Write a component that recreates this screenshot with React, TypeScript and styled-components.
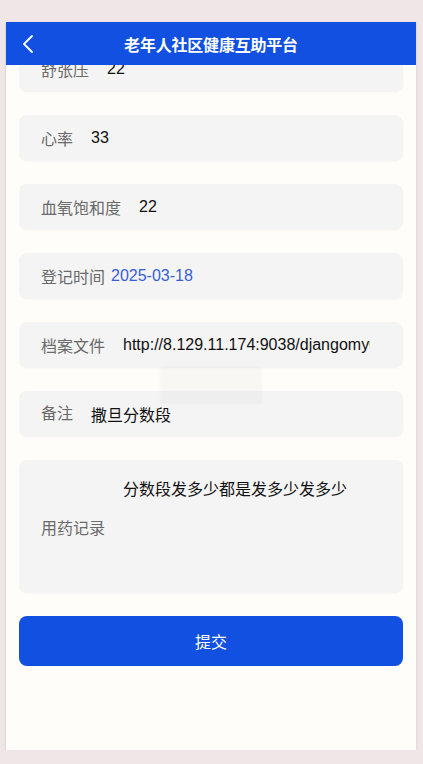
import React from 'react';
import styled, { createGlobalStyle } from 'styled-components';

const GlobalStyle = createGlobalStyle`
  html, body {
    margin: 0;
    padding: 0;
    background: #f0e5e7;
    font-family: "Liberation Sans", "Noto Sans CJK SC", sans-serif;
  }
`;

const P = {
  Frame: styled.div`
    margin: 22px 0 0 6px;
    width: 410px;
    height: 728px;
    background: #fffdf9;
    box-shadow: 0 1px 3px rgba(0, 0, 0, 0.12);
    position: relative;
    overflow: hidden;
  `,
  Header: styled.header`
    position: absolute;
    top: 0;
    left: 0;
    right: 0;
    height: 43px;
    background: #1150e0;
    color: #fff;
    display: flex;
    align-items: center;
    justify-content: center;
    z-index: 2;
  `,
  Back: styled.button`
    position: absolute;
    left: 11px;
    top: 11px;
    width: 22px;
    height: 22px;
    padding: 0;
    border: 0;
    background: none;
    display: flex;
    align-items: center;
    justify-content: center;
  `,
  Title: styled.h1`
    margin: 0;
    font-size: 16px;
    font-weight: 700;
    letter-spacing: -0.2px;
  `,
  Form: styled.div`
    padding: 24px 13px 0 13px;
    display: flex;
    flex-direction: column;
    gap: 23px;
  `,
};

const F = {
  Row: styled.div<{ $tall?: boolean }>`
    height: ${(p) => (p.$tall ? 133 : 46)}px;
    background: #f4f4f4;
    border-radius: 8px;
    box-shadow: 0 1px 2px rgba(0, 0, 0, 0.02);
    display: flex;
    align-items: center;
    padding: 0 33px 0 22px;
    box-sizing: border-box;
    overflow: hidden;
    position: relative;
  `,
  Label: styled.span<{ $gap?: number; $raise?: boolean }>`
    flex: none;
    font-size: 16px;
    color: #6a6a6a;
    margin-right: ${(p) => p.$gap ?? 18}px;
    margin-bottom: ${(p) => (p.$raise ? 5 : 0)}px;
    white-space: nowrap;
  `,
  Value: styled.span<{ $link?: boolean }>`
    font-size: 16px;
    color: ${(p) => (p.$link ? '#3660d8' : '#111')};
    white-space: nowrap;
    overflow: hidden;
  `,
  Area: styled.div`
    position: absolute;
    left: 104px;
    top: 16px;
    font-size: 16px;
    color: #111;
  `,
  Submit: styled.button`
    height: 50px;
    border: 0;
    border-radius: 8px;
    background: #1150e0;
    color: #fff;
    font-family: inherit;
    font-size: 16px;
  `,
  Toast: styled.div`
    position: absolute;
    left: 154px;
    top: 344px;
    width: 102px;
    height: 38px;
    background: rgba(0, 0, 0, 0.025);
    filter: blur(1px);
    border-radius: 3px;
  `,
};

const rows: { label: string; value: string; gap?: number; link?: boolean; raise?: boolean }[] = [
  { label: '舒张压', value: '22' },
  { label: '心率', value: '33' },
  { label: '血氧饱和度', value: '22' },
  { label: '登记时间', value: '2025-03-18', gap: 6, link: true },
  { label: '档案文件', value: 'http://8.129.11.174:9038/djangomy0' },
  { label: '备注', value: '撒旦分数段', raise: true },
];

const App: React.FC = () => {
  return (
    <>
      <GlobalStyle />
      <P.Frame>
        <P.Header>
          <P.Back aria-label="back">
            <svg width="14" height="20" viewBox="0 0 14 20" fill="none">
              <polyline points="11,2 3,10 11,18" stroke="#fff" strokeWidth="1.8" strokeLinecap="round" strokeLinejoin="round" />
            </svg>
          </P.Back>
          <P.Title>老年人社区健康互助平台</P.Title>
        </P.Header>
        <P.Form>
          {rows.map((r) => (
            <F.Row key={r.label}>
              <F.Label $gap={r.gap} $raise={r.raise}>{r.label}</F.Label>
              <F.Value $link={r.link}>{r.value}</F.Value>
            </F.Row>
          ))}
          <F.Row $tall>
            <F.Label>用药记录</F.Label>
            <F.Area>分数段发多少都是发多少发多少</F.Area>
          </F.Row>
          <F.Submit>提交</F.Submit>
        </P.Form>
        <F.Toast />
      </P.Frame>
    </>
  );
};

export default App;
